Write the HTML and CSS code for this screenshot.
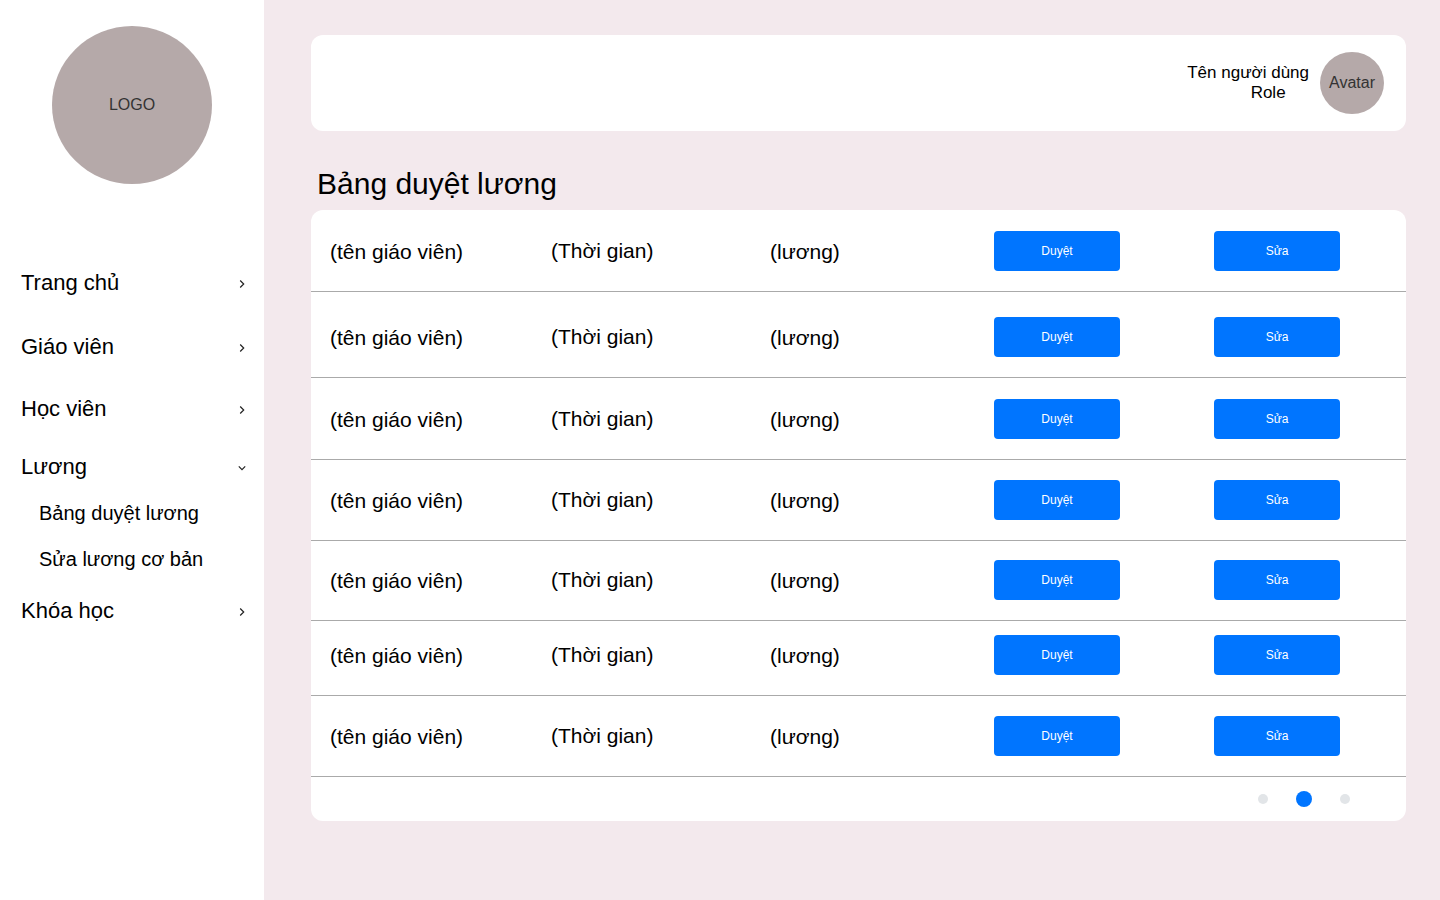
FILE: index.html
```html
<!DOCTYPE html>
<html lang="en">
<head>
    <meta charset="UTF-8">
    <meta name="viewport" content="width=device-width, initial-scale=1.0">
    <title>Bảng duyệt lương</title>
    <link rel="stylesheet" href="styles.css">
</head>

<body>
    <div class="layout">
        <aside class="sidebar">
            <div class="logo">LOGO</div>

            <ul class="menu">
                <li class="menu_item item_home">
                    <span>Trang chủ</span>
                    <svg class="chevron" viewBox="0 0 8 10"><path d="M2.2 1.5 L5.7 5 L2.2 8.5"/></svg>
                </li>
                <li class="menu_item item_teacher">
                    <span>Giáo viên</span>
                    <svg class="chevron" viewBox="0 0 8 10"><path d="M2.2 1.5 L5.7 5 L2.2 8.5"/></svg>
                </li>
                <li class="menu_item item_student">
                    <span>Học viên</span>
                    <svg class="chevron" viewBox="0 0 8 10"><path d="M2.2 1.5 L5.7 5 L2.2 8.5"/></svg>
                </li>
                <li class="menu_item item_salary">
                    <span>Lương</span>
                    <svg class="chevron" viewBox="0 0 8 10"><path d="M0.8 3.4 L4 6.6 L7.2 3.4"/></svg>
                </li>
                <li class="sub_item">Bảng duyệt lương</li>
                <li class="sub_item">Sửa lương cơ bản</li>
                <li class="menu_item item_course">
                    <span>Khóa học</span>
                    <svg class="chevron" viewBox="0 0 8 10"><path d="M2.2 1.5 L5.7 5 L2.2 8.5"/></svg>
                </li>
            </ul>
        </aside>

        <main class="content">
            <header class="topbar">
                <div class="user">
                    <div>Tên người dùng</div>
                    <div class="role">Role</div>
                </div>
                <div class="avatar">Avatar</div>
            </header>

            <h1 class="page_title">Bảng duyệt lương</h1>

            <section class="panel">
                <div class="rows">
                    <div class="row">
                        <span class="name">(tên giáo viên)</span>
                        <span class="time">(Thời gian)</span>
                        <span class="salary">(lương)</span>
                        <button class="btn">Duyệt</button>
                        <button class="btn">Sửa</button>
                    </div>
                    <div class="row">
                        <span class="name">(tên giáo viên)</span>
                        <span class="time">(Thời gian)</span>
                        <span class="salary">(lương)</span>
                        <button class="btn">Duyệt</button>
                        <button class="btn">Sửa</button>
                    </div>
                    <div class="row">
                        <span class="name">(tên giáo viên)</span>
                        <span class="time">(Thời gian)</span>
                        <span class="salary">(lương)</span>
                        <button class="btn">Duyệt</button>
                        <button class="btn">Sửa</button>
                    </div>
                    <div class="row">
                        <span class="name">(tên giáo viên)</span>
                        <span class="time">(Thời gian)</span>
                        <span class="salary">(lương)</span>
                        <button class="btn">Duyệt</button>
                        <button class="btn">Sửa</button>
                    </div>
                    <div class="row">
                        <span class="name">(tên giáo viên)</span>
                        <span class="time">(Thời gian)</span>
                        <span class="salary">(lương)</span>
                        <button class="btn">Duyệt</button>
                        <button class="btn">Sửa</button>
                    </div>
                    <div class="row">
                        <span class="name">(tên giáo viên)</span>
                        <span class="time">(Thời gian)</span>
                        <span class="salary">(lương)</span>
                        <button class="btn">Duyệt</button>
                        <button class="btn">Sửa</button>
                    </div>
                    <div class="row">
                        <span class="name">(tên giáo viên)</span>
                        <span class="time">(Thời gian)</span>
                        <span class="salary">(lương)</span>
                        <button class="btn">Duyệt</button>
                        <button class="btn">Sửa</button>
                    </div>
                </div>

                <div class="pager">
                    <span class="dot"></span>
                    <span class="dot active"></span>
                    <span class="dot"></span>
                </div>
            </section>
        </main>
    </div>
</body>
</html>
```

FILE: styles.css
```css
* {
    box-sizing: border-box;
}

body {
    margin: 0;
    height: 900px;
    overflow: hidden;
    background-color: #f3e9ed;
    font-family: "Liberation Sans", Arial, sans-serif;
    color: #000;
}

.layout {
    display: flex;
    height: 900px;
}

/* sidebar */
.sidebar {
    width: 264px;
    flex-shrink: 0;
    background-color: #fff;
    padding-top: 26px;
}

.logo {
    width: 160px;
    height: 158px;
    margin-left: 52px;
    border-radius: 50%;
    background-color: #b5a9a9;
    color: #333;
    font-size: 16px;
    display: flex;
    align-items: center;
    justify-content: center;
}

.menu {
    list-style: none;
    margin: 85px 0 0;
    padding: 0 18px 0 21px;
}

.menu_item {
    display: flex;
    align-items: center;
    justify-content: space-between;
    height: 28px;
    font-size: 22px;
}

.item_teacher {
    margin-top: 36px;
}

.item_student {
    margin-top: 34px;
}

.item_salary {
    margin-top: 30px;
}

.item_course {
    margin-top: 26px;
}

.chevron {
    width: 8px;
    height: 10px;
    margin-top: 2px;
    fill: none;
    stroke: #222;
    stroke-width: 1.2;
}

.sub_item {
    height: 24px;
    margin-top: 22px;
    padding-left: 18px;
    font-size: 20px;
    line-height: 24px;
}

.item_salary + .sub_item {
    margin-top: 20px;
}

/* main area */
.content {
    flex: 1;
    padding: 35px 34px 0 47px;
}

.topbar {
    height: 96px;
    background-color: #fff;
    border-radius: 12px;
    display: flex;
    align-items: center;
    justify-content: flex-end;
    padding-right: 22px;
}

.user {
    font-size: 17px;
    line-height: 20px;
    text-align: center;
    margin-right: 11px;
}

.role {
    padding-left: 40px;
}

.avatar {
    width: 64px;
    height: 62px;
    border-radius: 50%;
    background-color: #b5a9a9;
    color: #333;
    font-size: 16px;
    display: flex;
    align-items: center;
    justify-content: center;
}

.page_title {
    margin: 35px 0 8px 6px;
    height: 36px;
    font-size: 30px;
    line-height: 36px;
    font-weight: normal;
}

.panel {
    height: 611px;
    background-color: #fff;
    border-radius: 12px;
}

.rows {
    display: grid;
    grid-template-rows: 82px 86px 82px 81px 80px 75px 81px;
}

.row {
    display: grid;
    grid-template-columns: 221px 219px 224px 220px 126px;
    align-items: center;
    align-content: end;
    padding: 0 0 20px 19px;
    border-bottom: 1px solid #aaa;
    font-size: 21px;
}

.name,
.salary {
    position: relative;
    top: 1px;
}

.btn {
    width: 126px;
    height: 40px;
    border: none;
    border-radius: 4px;
    background-color: #0075ff;
    color: #fff;
    font-family: inherit;
    font-size: 12px;
    cursor: pointer;
}

.pager {
    display: flex;
    align-items: center;
    height: 44px;
    padding-left: 947px;
}

.dot {
    width: 10px;
    height: 10px;
    border-radius: 50%;
    background-color: #e2e5e8;
    margin-right: 28px;
}

.dot.active {
    width: 16px;
    height: 16px;
    background-color: #0075ff;
}
```
